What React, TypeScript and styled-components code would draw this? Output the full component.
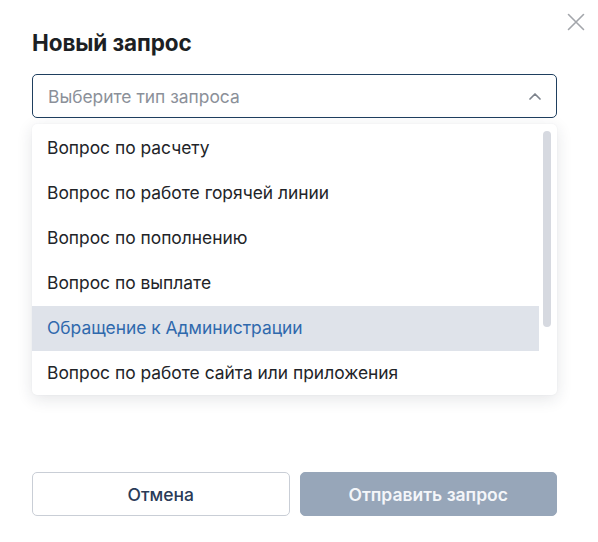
import React from "react";
import styled, { createGlobalStyle } from "styled-components";

const Global = createGlobalStyle`
  html, body { margin: 0; padding: 0; background: #ffffff; }
  body { font-family: Inter, "Noto Sans", sans-serif; -webkit-font-smoothing: antialiased; }
  * { box-sizing: border-box; }
`;

const Modal = styled.div`
  position: relative;
  width: 598px;
  height: 542px;
  padding: 29px 41px 26px 32px;
  display: flex;
  flex-direction: column;
  background: #fff;
`;

const Close = styled.button`
  position: absolute;
  top: 12px;
  right: 12px;
  width: 20px;
  height: 20px;
  padding: 0;
  border: 0;
  background: none;
  display: flex;
  align-items: center;
  justify-content: center;
  color: #a3a6ab;
`;

const Title = styled.h2`
  margin: 0 0 17px;
  font-size: 22.5px;
  line-height: 28px;
  font-weight: 700;
  color: #1c1f24;
  letter-spacing: -0.1px;
`;

const Field = styled.div`
  position: relative;
  height: 398px;
`;

const SelectBox = styled.div`
  height: 44px;
  border: 1px solid #1f3f5f;
  border-radius: 5px;
  display: flex;
  align-items: center;
  justify-content: space-between;
  padding: 0 14px 0 15px;
`;

const Placeholder = styled.span`
  font-size: 17.4px;
  color: #8b9099;
`;

const Menu = styled.div`
  position: absolute;
  top: 50px;
  left: 0;
  right: 0;
  height: 271px;
  background: #fff;
  border-radius: 5px;
  box-shadow: 0 4px 16px rgba(30, 40, 60, 0.12), 0 0 2px rgba(30, 40, 60, 0.06);
  padding: 2px 18px 0 0;
  overflow: hidden;
`;

const Item = styled.div<{ $active?: boolean }>`
  height: 45px;
  display: flex;
  align-items: center;
  padding: 0 0 2px 15px;
  font-size: 17.4px;
  color: ${(p) => (p.$active ? "#2f69ad" : "#222428")};
  background: ${(p) => (p.$active ? "#dfe3ea" : "transparent")};
`;

const Thumb = styled.div`
  position: absolute;
  top: 7px;
  right: 6px;
  width: 8px;
  height: 196px;
  border-radius: 4px;
  background: #d6d9e0;
`;

const Actions = styled.div`
  display: flex;
  gap: 10px;
`;

const Button = styled.button<{ $primary?: boolean }>`
  flex: 1;
  height: 44px;
  border-radius: 5px;
  font-family: Inter, "Noto Sans", sans-serif;
  font-size: 17.5px;
  font-weight: ${(p) => (p.$primary ? 600 : 500)};
  border: 1px solid ${(p) => (p.$primary ? "#97a6b9" : "#c9ced6")};
  background: ${(p) => (p.$primary ? "#97a6b9" : "#fff")};
  color: ${(p) => (p.$primary ? "#f4f6f9" : "#2a3b58")};
`;

const items = [
  "Вопрос по расчету",
  "Вопрос по работе горячей линии",
  "Вопрос по пополнению",
  "Вопрос по выплате",
  "Обращение к Администрации",
  "Вопрос по работе сайта или приложения",
];

export default function App() {
  return (
    <>
      <Global />
      <Modal>
        <Close aria-label="Закрыть">
          <svg width="18" height="18" viewBox="0 0 18 18" fill="none" stroke="currentColor" strokeWidth="1.6" strokeLinecap="round">
            <path d="M1.5 1.5L16.5 16.5M16.5 1.5L1.5 16.5" />
          </svg>
        </Close>
        <Title>Новый запрос</Title>
        <Field>
          <SelectBox>
            <Placeholder>Выберите тип запроса</Placeholder>
            <svg width="14" height="8" viewBox="0 0 14 8" fill="none" stroke="#7d838c" strokeWidth="1.7" strokeLinecap="round" strokeLinejoin="round">
              <path d="M2 7L7 2L12 7" />
            </svg>
          </SelectBox>
          <Menu>
            {items.map((t, i) => (
              <Item key={t} $active={i === 4}>
                {t}
              </Item>
            ))}
            <Thumb />
          </Menu>
        </Field>
        <Actions>
          <Button>Отмена</Button>
          <Button $primary>Отправить запрос</Button>
        </Actions>
      </Modal>
    </>
  );
}
